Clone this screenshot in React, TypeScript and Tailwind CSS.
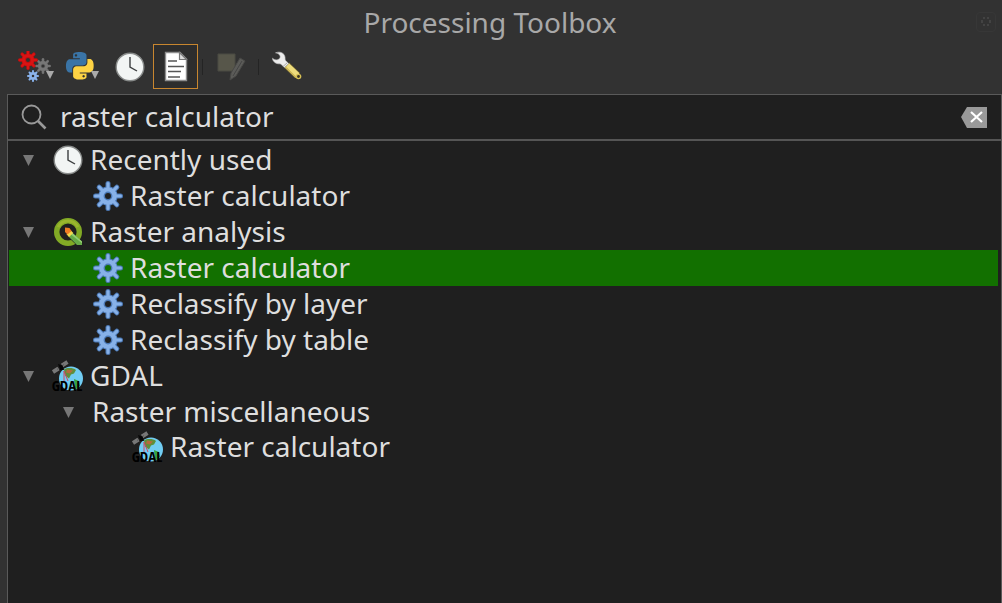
import { useState } from 'react';
import type { ReactNode } from 'react';
import clsx from 'clsx';

const TEETH = [0, 45, 90, 135, 180, 225, 270, 315];

const PYTHON_HALF =
  'M14.25.18l.9.2.73.26.59.3.45.32.34.34.25.34.16.33.1.3.04.26.02.2-.01.13V8.5l-.05.63-.13.55-.21.46-.26.38-.3.31-.33.25-.35.19-.35.14-.33.1-.3.07-.26.04-.21.02H8.77l-.69.05-.59.14-.5.22-.41.27-.33.32-.27.35-.2.36-.15.37-.1.35-.07.32-.04.27-.02.21v3.06H3.17l-.21-.03-.28-.07-.32-.12-.35-.18-.36-.26-.36-.36-.35-.46-.32-.59-.28-.73-.21-.88-.14-1.05-.05-1.23.06-1.22.16-1.04.24-.87.32-.71.36-.57.4-.44.42-.33.42-.24.4-.16.36-.1.32-.05.24-.01h.16l.06.01h8.16v-.83H6.18l-.01-2.75-.02-.37.05-.34.11-.31.17-.28.25-.26.31-.23.38-.2.44-.18.51-.15.58-.12.64-.1.71-.06.77-.04.84-.02 1.27.05zm-6.3 1.98l-.23.33-.08.41.08.41.23.34.33.22.41.09.41-.09.33-.22.23-.34.08-.41-.08-.41-.23-.33-.33-.22-.41-.09-.41.09z';

interface GearProps {
  cx: number;
  cy: number;
  r: number;
  fill: string;
  edge: string;
}

function Gear({ cx, cy, r, fill, edge }: GearProps) {
  return (
    <g transform={`translate(${cx} ${cy}) scale(${r / 15})`} strokeLinecap="round" fill="none">
      {TEETH.map((a) => (
        <path key={a} d="M0-8V-12.5" stroke={edge} strokeWidth="5" transform={`rotate(${a})`} />
      ))}
      <circle r="6.400" stroke={edge} strokeWidth="6.800" />
      {TEETH.map((a) => (
        <path key={a} d="M0-8V-12.5" stroke={fill} strokeWidth="3" transform={`rotate(${a})`} />
      ))}
      <circle r="6.600" stroke={fill} strokeWidth="4.400" />
    </g>
  );
}

function GearIcon() {
  return (
    <svg className="size-8" viewBox="0 0 32 32" aria-hidden="true">
      <Gear cx={16} cy={16} r={15} fill="#87b1e8" edge="#4b78b4" />
    </svg>
  );
}

function ModelsIcon() {
  return (
    <svg className="h-8 w-9" viewBox="0 0 36 32" aria-hidden="true">
      <Gear cx={25} cy={15} r={8} fill="#777" edge="#686868" />
      <Gear cx={10} cy={9} r={10} fill="#d81414" edge="#c40d0d" />
      <Gear cx={15} cy={25} r={6} fill="#8db4ea" edge="#7ba5de" />
      <path d="M28 20h8l-4 8z" fill="#aaa" />
    </svg>
  );
}

function PythonIcon() {
  return (
    <svg className="h-8 w-9" viewBox="0 0 36 32" aria-hidden="true">
      <g transform="translate(1 1) scale(1.15)">
        <path d={PYTHON_HALF} fill="#3a74a6" />
        <path d={PYTHON_HALF} fill="#fdd344" transform="rotate(180 12 12)" />
      </g>
      <path d="M26 20h8l-4 8z" fill="#aaa" />
    </svg>
  );
}

function ClockIcon() {
  return (
    <svg className="size-8" viewBox="0 0 32 32" aria-hidden="true">
      <circle cx="16" cy="16" r="13.800" fill="#f2f5f4" stroke="#888b8a" strokeWidth="1.400" />
      <path d="M16 6v10l7 4" fill="none" stroke="#3c3f40" strokeWidth="1.400" />
    </svg>
  );
}

function ResultsIcon() {
  return (
    <svg className="size-8" viewBox="0 0 32 32" aria-hidden="true">
      <path d="M5.500 1.500H20L26.500 8V29.500h-21z" fill="#fff" stroke="#8f8f8f" strokeWidth="1.400" />
      <path d="M19.500 1.500V8.500h7z" fill="#ddd" stroke="#777" strokeWidth="1.200" />
      <path d="M8 10h9M8 15.500h16M8 20.500h13M8 26h12" stroke="#555" strokeWidth="1.500" />
    </svg>
  );
}

function EditInPlaceIcon() {
  return (
    <svg className="size-8" viewBox="0 0 32 32" aria-hidden="true">
      <path d="M3 3h17v17H3z" fill="#57564a" stroke="#4a4a42" />
      <path d="M25 7l5 3-9 15-6 4 1-7z" fill="#5b5b58" stroke="#484846" />
      <path d="M27 10l-9 15" stroke="#444" />
    </svg>
  );
}

function WrenchIcon() {
  return (
    <svg className="size-8" viewBox="0 0 32 32" aria-hidden="true">
      <path d="M15.500 14l11 10.500" stroke="#5b522a" strokeWidth="7.500" />
      <path d="M16 14.500l10.500 10" stroke="#eedc7c" strokeWidth="6" />
      <path d="M15 16.500l10 10" stroke="#c9b352" strokeWidth="1.200" />
      <circle cx="27.500" cy="25.500" r="2.800" fill="#d6bf54" />
      <circle cx="27.500" cy="25.500" r="1.400" fill="#3a3523" />
      <path
        d="M4.500 1.800c4.500-1.800 9 .2 9.500 4.200.2 2-.1 2.500.6 3.500l3 3-4.200 4-3.200-3c-1-1-2-.4-3.500-.8C3.500 12 1.300 9.500 1.500 7.200c2 2 5 2.300 6.800.6s1-5-3.800-6z"
        fill="#ececec"
        stroke="#bbb"
        strokeWidth=".6"
      />
      <path d="M12 15.500l5-4.500" stroke="#aaa" />
    </svg>
  );
}

function QgisIcon() {
  return (
    <svg className="size-8" viewBox="0 0 32 32" aria-hidden="true">
      <circle cx="16" cy="16" r="11.300" fill="none" stroke="#82aa25" strokeWidth="5.400" />
      <path d="M6 11A11.300 11.300 0 0 1 26 11" fill="none" stroke="#9ab52e" strokeWidth="3" />
      <path d="M19 16l11.500 10v3.500H25L15 20z" fill="#1f1f1f" />
      <path d="M20.500 17l9.500 8.500V29h-5l-8.500-8.500z" fill="#68ab47" />
      <path d="M20.500 17l9.500 8.500v1.800L19 18.500z" fill="#94ce72" />
      <path d="M18.500 14l2.800 3-4.300 4-2.500-2.800z" fill="#f3d94b" />
      <path d="M13 11.500l4.500.5 2 3-4 3.500-2.500-2.500z" fill="#ef7d24" />
    </svg>
  );
}

function GdalIcon() {
  return (
    <svg className="size-8 overflow-visible" viewBox="0 0 32 32" aria-hidden="true">
      <circle cx="19" cy="18.500" r="12" fill="#71cdf3" />
      <path d="M12 9.500c3-2 9-2 12 .500l-2 3.500-3 1-2 4-4-3z" fill="#5f8f3b" />
      <path d="M15 9.500l6 1-3 3-4-1z" fill="#b56a3c" />
      <path d="M22 19l5 2 1 5-5 4z" fill="#37a344" />
      <path d="M12 11v10M12 11l4 10" stroke="#c94a63" />
      <path d="M1 12l5.500-3.500M10 5.500L15.500 2" stroke="#777" strokeWidth="4" />
      <path d="M5 9.500l7-5" stroke="#555" />
      <path d="M6 4l4.500 1.500L12 10H8z" fill="#080808" />
      <text
        x="15"
        y="31"
        textAnchor="middle"
        fill="#000"
        fontFamily="Open Sans Condensed, Liberation Sans Narrow, sans-serif"
        fontSize="15"
        fontWeight="700"
      >
        GDAL
      </text>
    </svg>
  );
}

const TOOLS: { label: string; icon: ReactNode; active?: boolean; disabled?: boolean }[][] = [
  [
    { label: 'Models', icon: <ModelsIcon /> },
    { label: 'Scripts', icon: <PythonIcon /> },
    { label: 'History', icon: <ClockIcon /> },
    { label: 'Results Viewer', icon: <ResultsIcon />, active: true },
  ],
  [{ label: 'Edit Features In-Place', icon: <EditInPlaceIcon />, disabled: true }],
  [{ label: 'Options', icon: <WrenchIcon /> }],
];

interface TreeNode {
  id: string;
  label: string;
  icon?: ReactNode;
  children?: TreeNode[];
}

const TREE: TreeNode[] = [
  {
    id: 'recent',
    label: 'Recently used',
    icon: <ClockIcon />,
    children: [{ id: 'recent-calc', label: 'Raster calculator', icon: <GearIcon /> }],
  },
  {
    id: 'analysis',
    label: 'Raster analysis',
    icon: <QgisIcon />,
    children: [
      { id: 'calc', label: 'Raster calculator', icon: <GearIcon /> },
      { id: 'by-layer', label: 'Reclassify by layer', icon: <GearIcon /> },
      { id: 'by-table', label: 'Reclassify by table', icon: <GearIcon /> },
    ],
  },
  {
    id: 'gdal',
    label: 'GDAL',
    icon: <GdalIcon />,
    children: [
      {
        id: 'gdal-misc',
        label: 'Raster miscellaneous',
        children: [{ id: 'gdal-calc', label: 'Raster calculator', icon: <GdalIcon /> }],
      },
    ],
  },
];

interface BranchProps {
  nodes: TreeNode[];
  selected: string;
  onSelect: (id: string) => void;
  level?: number;
}

function Branch({ nodes, selected, onSelect, level = 0 }: BranchProps) {
  const [closed, setClosed] = useState<string[]>([]);

  const toggle = (id: string) =>
    setClosed((ids) => (ids.includes(id) ? ids.filter((i) => i !== id) : [...ids, id]));

  return (
    <ul role={level === 0 ? 'tree' : 'group'}>
      {nodes.map(({ id, label, icon, children }) => {
        const open = !closed.includes(id);
        return (
          <li
            key={id}
            role="treeitem"
            aria-selected={selected === id}
            aria-expanded={children ? open : undefined}
          >
            <div
              onClick={() => onSelect(id)}
              className={clsx(
                'flex items-center leading-[34px]',
                icon ? 'h-9' : 'h-[35px]',
                selected === id && 'bg-[#127000]',
              )}
              style={{ paddingLeft: level * 40 }}
            >
              <div className="flex w-[43px] shrink-0 pl-[11px]">
                {children && (
                  <button type="button" aria-label={`Toggle ${label}`} onClick={() => toggle(id)}>
                    <svg
                      className={clsx('size-4', !open && '-rotate-90')}
                      viewBox="0 0 16 16"
                      aria-hidden="true"
                    >
                      <path d="M3 3h11L8.500 14z" fill="#777" />
                    </svg>
                  </button>
                )}
              </div>
              {icon}
              <span className={clsx('whitespace-nowrap pb-0.5', icon && 'pl-1.5')}>{label}</span>
            </div>
            {children && open && (
              <Branch nodes={children} selected={selected} onSelect={onSelect} level={level + 1} />
            )}
          </li>
        );
      })}
    </ul>
  );
}

export default function App() {
  const [query, setQuery] = useState('raster calculator');
  const [selected, setSelected] = useState('calc');

  return (
    <div className="flex min-h-screen flex-col bg-[#323232] font-['Noto_Sans',sans-serif] text-[28px] leading-9 text-[#dedede]">
      <header className="flex h-11 items-center pr-1.5">
        <h1 className="flex-1 pl-1 text-center text-[#a8a8a8]">Processing Toolbox</h1>
        <button type="button" aria-label="Close" className="size-5 rounded-sm border border-[#373737]">
          <svg viewBox="0 0 18 18" aria-hidden="true">
            <path d="M6 5h2M10 5h2M6 12h2M10 12h2M5 7v3M13 7v3" stroke="#555" />
          </svg>
        </button>
      </header>

      <div role="toolbar" aria-label="Toolbox" className="mb-1 flex h-[46px] items-start pl-3">
        {TOOLS.map((group, i) => (
          <div key={i} className="flex items-center">
            {i > 0 && <div className="mx-1 h-4 w-px bg-[#242424]" />}
            {group.map(({ label, icon, active, disabled }) => (
              <button
                key={label}
                type="button"
                aria-label={label}
                aria-pressed={active}
                disabled={disabled}
                className={clsx(
                  'flex h-[45px] items-center justify-center border',
                  active ? 'w-[45px] border-[#c8862f] bg-[#2d2d2d]' : 'w-[47px] border-transparent',
                )}
              >
                {icon}
              </button>
            ))}
          </div>
        ))}
      </div>

      <main className="ml-[7px] flex flex-1 flex-col border border-b-0 border-[#5a5a5a] bg-[#1f1f1f]">
        <div className="flex h-[46px] items-center border-b-2 border-[#555] px-3">
          <svg className="size-7 shrink-0" viewBox="0 0 28 28" fill="none" stroke="#999" aria-hidden="true">
            <circle cx="11.500" cy="11.500" r="9" strokeWidth="1.800" />
            <path d="M18 18l7.500 7.500" strokeWidth="2.600" />
          </svg>
          <input
            type="text"
            aria-label="Search"
            value={query}
            onChange={(e) => setQuery(e.target.value)}
            className="min-w-0 flex-1 bg-transparent pb-0.5 pl-3 outline-none"
          />
          <button type="button" aria-label="Clear search" onClick={() => setQuery('')}>
            <svg className="h-6 w-7" viewBox="0 0 28 24" aria-hidden="true">
              <path d="M0 12l6-10h20v21H6z" fill="#999" />
              <path d="M10 7l11 10M21 7L10 17" stroke="#fff" strokeWidth="2.200" />
            </svg>
          </button>
        </div>
        <div className="mr-[3px] ml-px pt-px">
          <Branch nodes={TREE} selected={selected} onSelect={setSelected} />
        </div>
      </main>
    </div>
  );
}
